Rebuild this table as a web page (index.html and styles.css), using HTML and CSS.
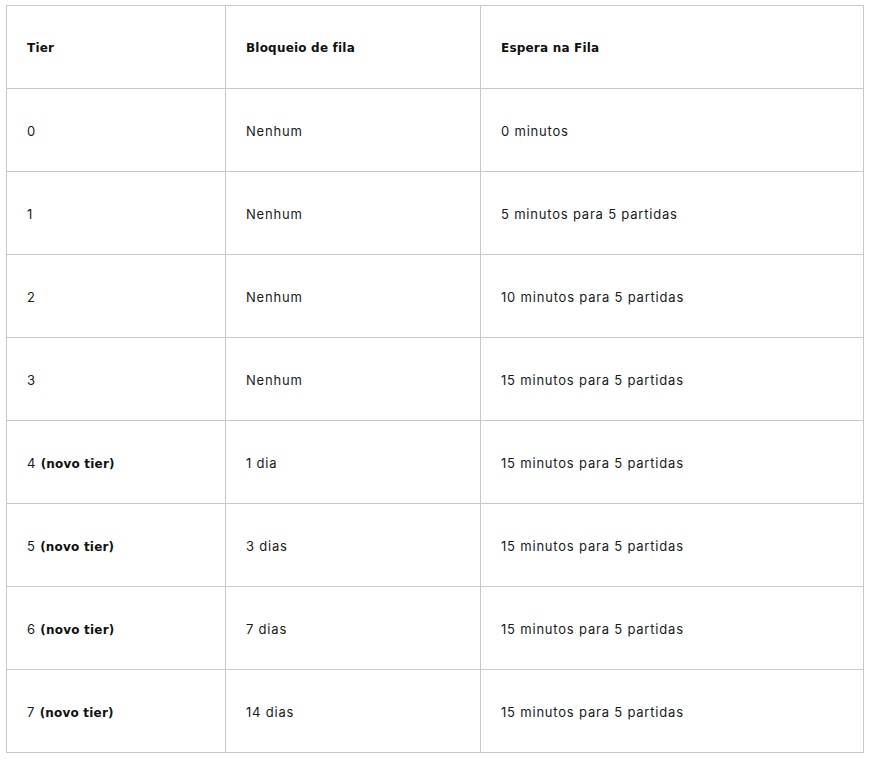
FILE: index.html
```html
<!DOCTYPE html>
<html lang="pt">
<head>
<meta charset="utf-8">
<link rel="stylesheet" href="styles.css">
</head>
<body>
<table class="tiers">
  <colgroup><col class="c1"><col class="c2"><col class="c3"></colgroup>
  <thead>
    <tr><th>Tier</th><th>Bloqueio de fila</th><th>Espera na Fila</th></tr>
  </thead>
  <tbody>
    <tr><td>0</td><td>Nenhum</td><td>0 minutos</td></tr>
    <tr><td>1</td><td>Nenhum</td><td>5 minutos para 5 partidas</td></tr>
    <tr><td>2</td><td>Nenhum</td><td>10 minutos para 5 partidas</td></tr>
    <tr><td>3</td><td>Nenhum</td><td>15 minutos para 5 partidas</td></tr>
    <tr><td>4 <b>(novo tier)</b></td><td>1 dia</td><td>15 minutos para 5 partidas</td></tr>
    <tr><td>5 <b>(novo tier)</b></td><td>3 dias</td><td>15 minutos para 5 partidas</td></tr>
    <tr><td>6 <b>(novo tier)</b></td><td>7 dias</td><td>15 minutos para 5 partidas</td></tr>
    <tr><td>7 <b>(novo tier)</b></td><td>14 dias</td><td>15 minutos para 5 partidas</td></tr>
  </tbody>
</table>
</body>
</html>
```
FILE: styles.css
```css
html, body { margin: 0; background: #fff; }
body { padding: 5px 6px; }
.tiers {
  border-collapse: collapse;
  width: 857px;
  table-layout: fixed;
  font-family: Inter, "Noto Sans", sans-serif;
  font-size: 13px;
  color: #1a1a1a;
}
.c1 { width: 219px; }
.c2 { width: 255px; }
.c3 { width: 383px; }
.tiers th, .tiers td {
  border: 1px solid #c8c8c8;
  height: 83px;
  padding: 2px 20px 0;
  text-align: left;
  vertical-align: middle;
  box-sizing: border-box;
  letter-spacing: 0.8px;
}
.tiers th, .tiers b {
  font-family: "DejaVu Sans", sans-serif;
  font-weight: bold;
  font-size: 12px;
  letter-spacing: 0.2px;
  color: #111;
}
```
